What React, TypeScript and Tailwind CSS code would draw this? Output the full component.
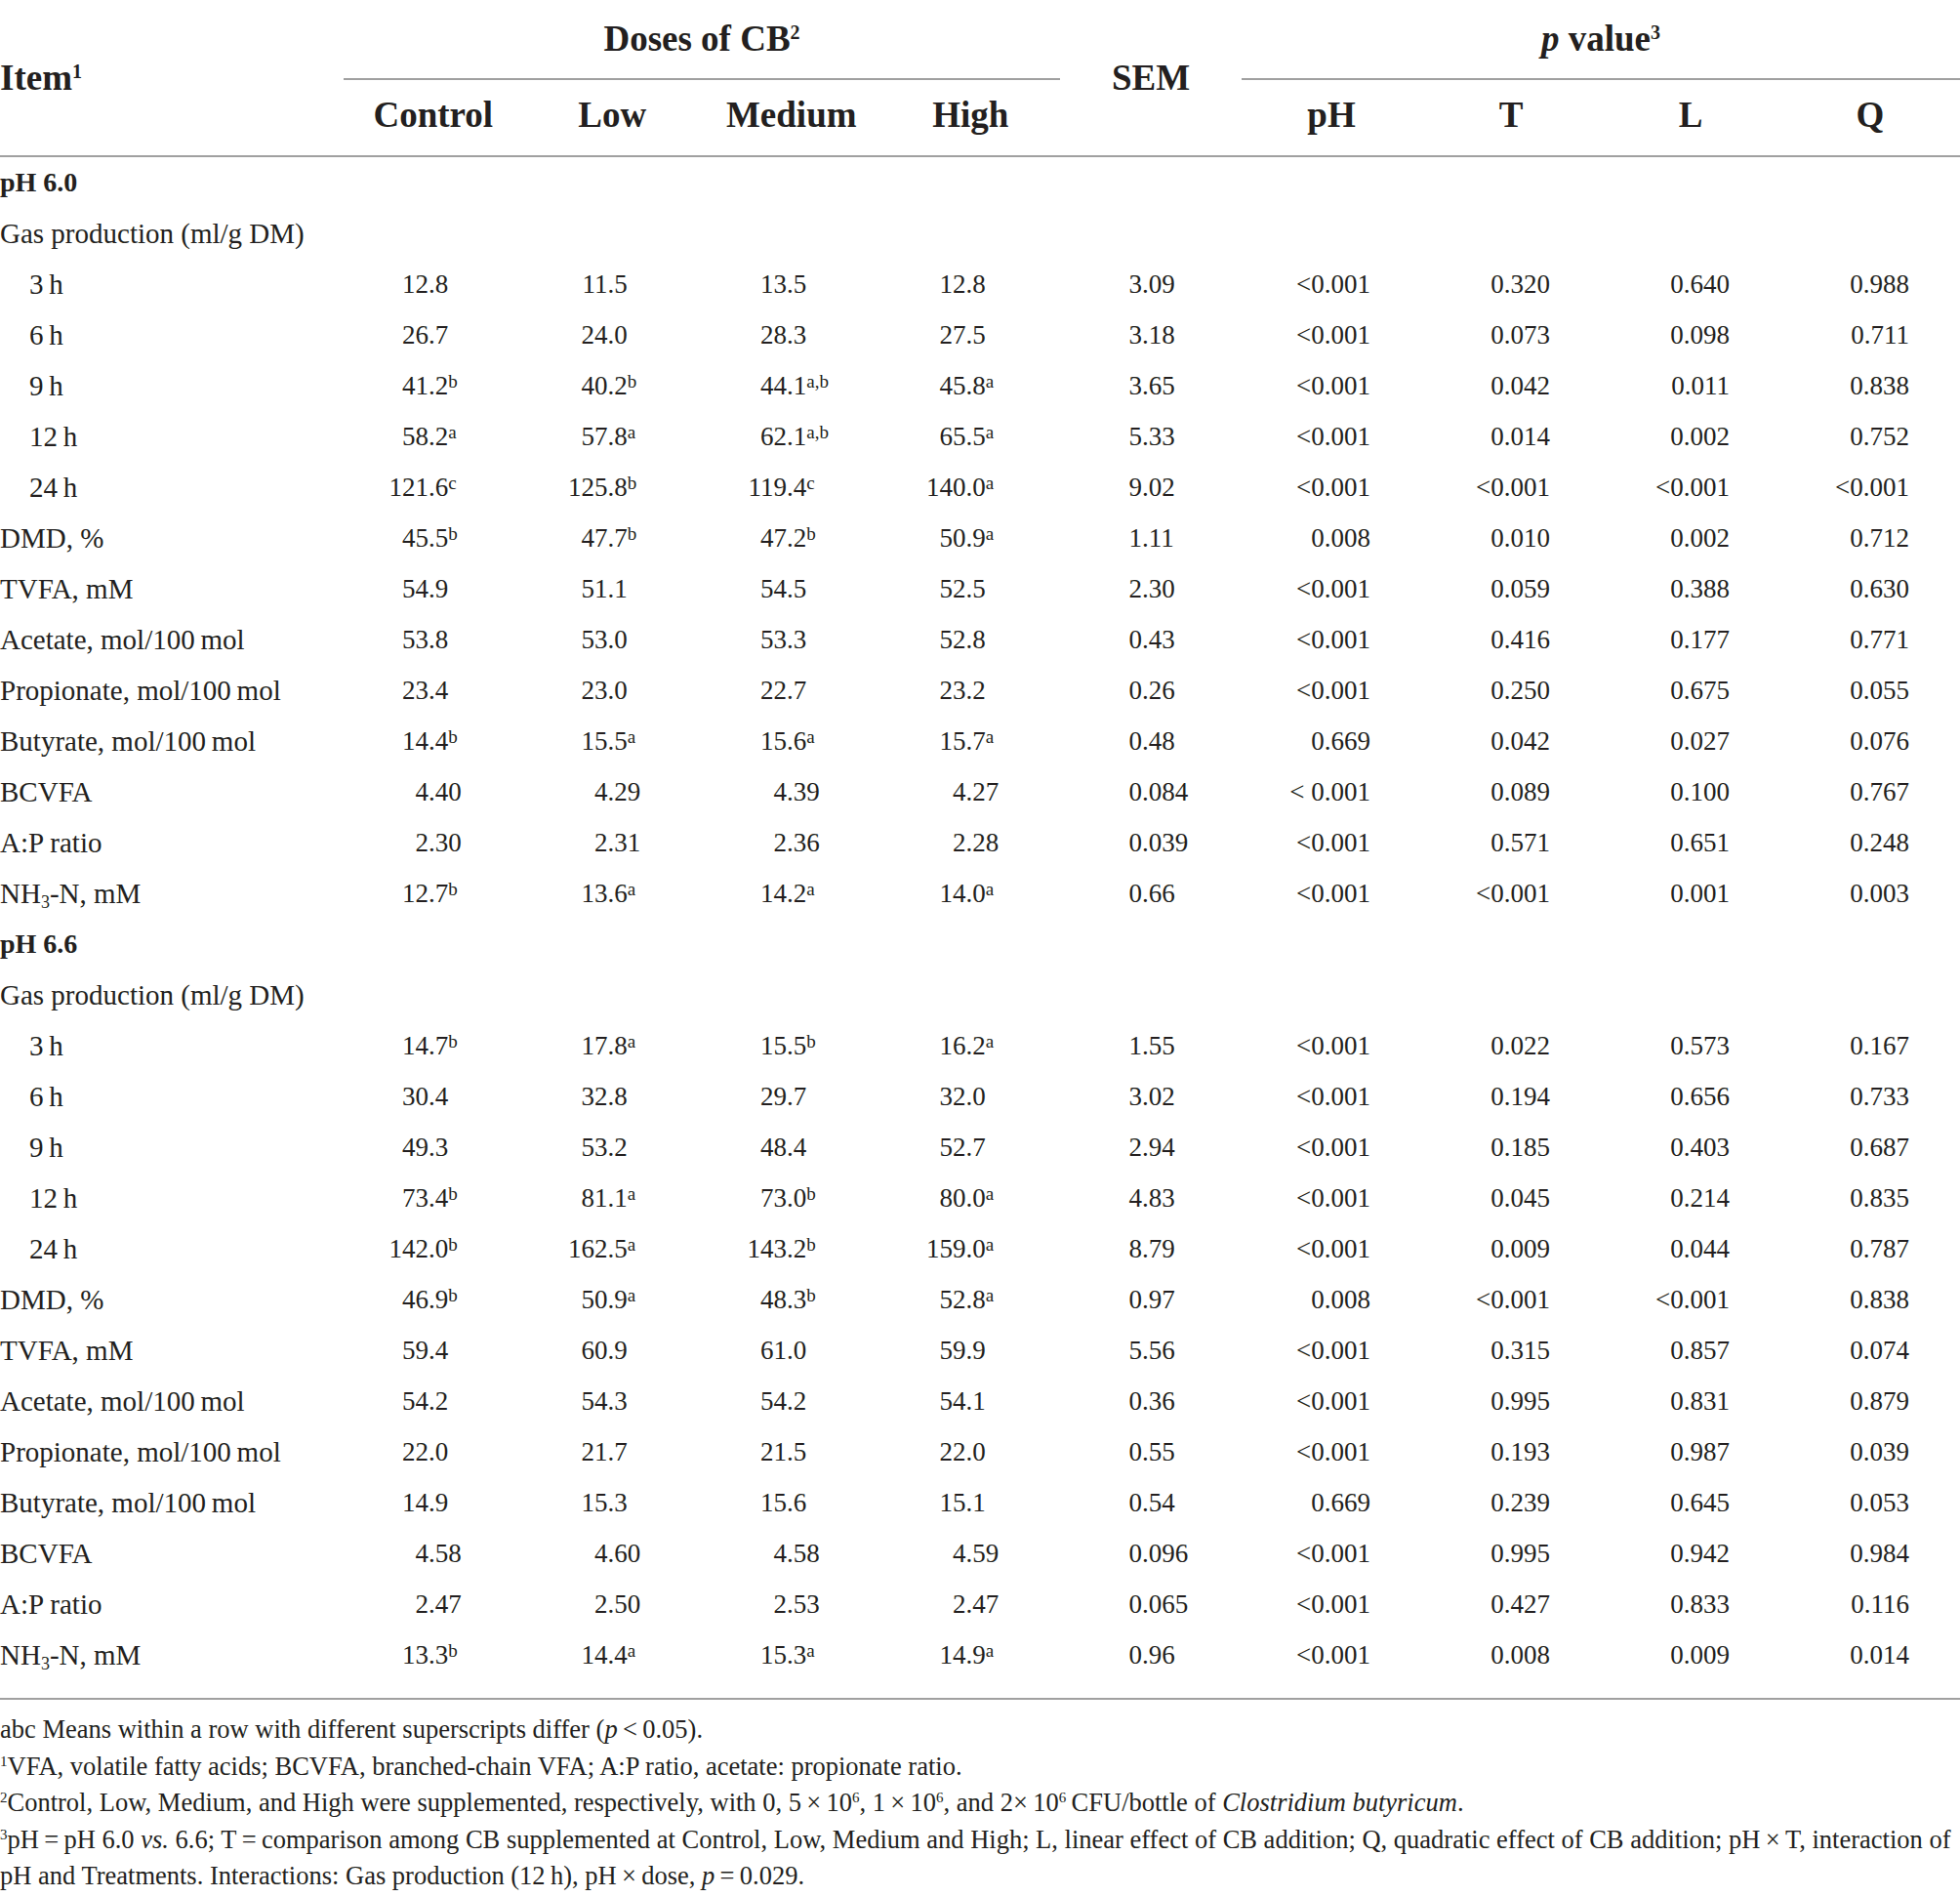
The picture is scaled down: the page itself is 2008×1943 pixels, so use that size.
import React from "react";

const GRID = "grid grid-cols-[352px_repeat(4,183.5px)_186px_repeat(4,184px)]";

type RowData = {
  label: React.ReactNode;
  indent?: boolean;
  d: string[];
  sem: string;
  p: string[];
};

function Dec({ v, sem }: { v: string; sem?: boolean }) {
  const [num, sup] = v.split("|");
  const i = num.indexOf(".");
  const intPart = num.slice(0, i);
  const frac = num.slice(i);
  return (
    <div className="flex text-[27px] leading-[32px]">
      <span className={sem ? "w-[84px] shrink-0 text-right" : "w-[87px] shrink-0 text-right"}>{intPart}</span>
      <span className="whitespace-nowrap">
        {frac}
        {sup && <sup className="text-[19px] top-[-7px]">{sup}</sup>}
      </span>
    </div>
  );
}

function Row({ label, indent, d, sem, p }: RowData) {
  return (
    <div className={`${GRID} h-[52px] items-center`}>
      <div className={indent ? "pl-[30px] text-[29px] leading-[32px] whitespace-nowrap" : "text-[29px] leading-[32px] whitespace-nowrap"}>
        {label}
      </div>
      {d.map((v, k) => (
        <Dec key={k} v={v} />
      ))}
      <Dec v={sem} sem />
      {p.map((v, k) => (
        <div key={k} className="text-right pr-[52px] text-[27px] leading-[32px] whitespace-pre">
          {v}
        </div>
      ))}
    </div>
  );
}

function Section({ title, rows }: { title: string; rows: RowData[] }) {
  return (
    <>
      <div className="h-[52px] flex items-center text-[28px] font-bold leading-[32px]">{title}</div>
      <div className="h-[52px] flex items-center text-[29px] leading-[32px]">Gas production (ml/g DM)</div>
      {rows.map((r, k) => (
        <Row key={k} {...r} />
      ))}
    </>
  );
}

const NH3 = (
  <>
    NH<sub className="text-[18px]">3</sub>-N, mM
  </>
);

const ph60: RowData[] = [
  { label: "3\u2009h", indent: true, d: ["12.8", "11.5", "13.5", "12.8"], sem: "3.09", p: ["<0.001", "0.320", "0.640", "0.988"] },
  { label: "6\u2009h", indent: true, d: ["26.7", "24.0", "28.3", "27.5"], sem: "3.18", p: ["<0.001", "0.073", "0.098", "0.711"] },
  { label: "9\u2009h", indent: true, d: ["41.2|b", "40.2|b", "44.1|a,b", "45.8|a"], sem: "3.65", p: ["<0.001", "0.042", "0.011", "0.838"] },
  { label: "12\u2009h", indent: true, d: ["58.2|a", "57.8|a", "62.1|a,b", "65.5|a"], sem: "5.33", p: ["<0.001", "0.014", "0.002", "0.752"] },
  { label: "24\u2009h", indent: true, d: ["121.6|c", "125.8|b", "119.4|c", "140.0|a"], sem: "9.02", p: ["<0.001", "<0.001", "<0.001", "<0.001"] },
  { label: "DMD, %", d: ["45.5|b", "47.7|b", "47.2|b", "50.9|a"], sem: "1.11", p: ["0.008", "0.010", "0.002", "0.712"] },
  { label: "TVFA, mM", d: ["54.9", "51.1", "54.5", "52.5"], sem: "2.30", p: ["<0.001", "0.059", "0.388", "0.630"] },
  { label: "Acetate, mol/100\u2009mol", d: ["53.8", "53.0", "53.3", "52.8"], sem: "0.43", p: ["<0.001", "0.416", "0.177", "0.771"] },
  { label: "Propionate, mol/100\u2009mol", d: ["23.4", "23.0", "22.7", "23.2"], sem: "0.26", p: ["<0.001", "0.250", "0.675", "0.055"] },
  { label: "Butyrate, mol/100\u2009mol", d: ["14.4|b", "15.5|a", "15.6|a", "15.7|a"], sem: "0.48", p: ["0.669", "0.042", "0.027", "0.076"] },
  { label: "BCVFA", d: ["4.40", "4.29", "4.39", "4.27"], sem: "0.084", p: ["< 0.001", "0.089", "0.100", "0.767"] },
  { label: "A:P ratio", d: ["2.30", "2.31", "2.36", "2.28"], sem: "0.039", p: ["<0.001", "0.571", "0.651", "0.248"] },
  { label: NH3, d: ["12.7|b", "13.6|a", "14.2|a", "14.0|a"], sem: "0.66", p: ["<0.001", "<0.001", "0.001", "0.003"] },
];

const ph66: RowData[] = [
  { label: "3\u2009h", indent: true, d: ["14.7|b", "17.8|a", "15.5|b", "16.2|a"], sem: "1.55", p: ["<0.001", "0.022", "0.573", "0.167"] },
  { label: "6\u2009h", indent: true, d: ["30.4", "32.8", "29.7", "32.0"], sem: "3.02", p: ["<0.001", "0.194", "0.656", "0.733"] },
  { label: "9\u2009h", indent: true, d: ["49.3", "53.2", "48.4", "52.7"], sem: "2.94", p: ["<0.001", "0.185", "0.403", "0.687"] },
  { label: "12\u2009h", indent: true, d: ["73.4|b", "81.1|a", "73.0|b", "80.0|a"], sem: "4.83", p: ["<0.001", "0.045", "0.214", "0.835"] },
  { label: "24\u2009h", indent: true, d: ["142.0|b", "162.5|a", "143.2|b", "159.0|a"], sem: "8.79", p: ["<0.001", "0.009", "0.044", "0.787"] },
  { label: "DMD, %", d: ["46.9|b", "50.9|a", "48.3|b", "52.8|a"], sem: "0.97", p: ["0.008", "<0.001", "<0.001", "0.838"] },
  { label: "TVFA, mM", d: ["59.4", "60.9", "61.0", "59.9"], sem: "5.56", p: ["<0.001", "0.315", "0.857", "0.074"] },
  { label: "Acetate, mol/100\u2009mol", d: ["54.2", "54.3", "54.2", "54.1"], sem: "0.36", p: ["<0.001", "0.995", "0.831", "0.879"] },
  { label: "Propionate, mol/100\u2009mol", d: ["22.0", "21.7", "21.5", "22.0"], sem: "0.55", p: ["<0.001", "0.193", "0.987", "0.039"] },
  { label: "Butyrate, mol/100\u2009mol", d: ["14.9", "15.3", "15.6", "15.1"], sem: "0.54", p: ["0.669", "0.239", "0.645", "0.053"] },
  { label: "BCVFA", d: ["4.58", "4.60", "4.58", "4.59"], sem: "0.096", p: ["<0.001", "0.995", "0.942", "0.984"] },
  { label: "A:P ratio", d: ["2.47", "2.50", "2.53", "2.47"], sem: "0.065", p: ["<0.001", "0.427", "0.833", "0.116"] },
  { label: NH3, d: ["13.3|b", "14.4|a", "15.3|a", "14.9|a"], sem: "0.96", p: ["<0.001", "0.008", "0.009", "0.014"] },
];

export default function App() {
  return (
    <div className="w-[2008px] h-[1943px] bg-white text-[#231f20] font-['Liberation_Serif',serif] overflow-hidden">
      {/* Header */}
      <div className={`${GRID} grid-rows-[82px_77px] border-b-2 border-[#a0a0a0] font-bold text-[37px] leading-[44px]`}>
        <div className="row-span-2 flex items-center">
          <span>
            Item<sup className="text-[20px] top-[-12px]">1</sup>
          </span>
        </div>
        <div className="col-span-4 flex items-center justify-center border-b-2 border-[#a0a0a0]">
          <span>
            Doses of CB<sup className="text-[20px] top-[-12px] font-bold">2</sup>
          </span>
        </div>
        <div className="row-span-2 flex items-center justify-center">SEM</div>
        <div className="col-span-4 flex items-center justify-center border-b-2 border-[#a0a0a0]">
          <span>
            <i>p</i> value<sup className="text-[20px] top-[-12px]">3</sup>
          </span>
        </div>
        {["Control", "Low", "Medium", "High"].map((h) => (
          <div key={h} className="flex items-start justify-center pt-[14px]">
            {h}
          </div>
        ))}
        {["pH", "T", "L", "Q"].map((h) => (
          <div key={h} className="flex items-start justify-center pt-[14px]">
            {h}
          </div>
        ))}
      </div>

      {/* Body */}
      <div className="pb-[18px] border-b-2 border-[#a0a0a0]">
        <Section title="pH 6.0" rows={ph60} />
        <Section title="pH 6.6" rows={ph66} />
      </div>

      {/* Footnotes */}
      <div className="pt-[12px] text-[26.5px] leading-[37.5px]">
        <p>
          abc Means within a row with different superscripts differ (<i>p</i>{"\u2009<\u2009"}0.05).
        </p>
        <p>
          <sup className="text-[15px] top-[-9px]">1</sup>VFA, volatile fatty acids; BCVFA, branched-chain VFA; A:P ratio, acetate: propionate ratio.
        </p>
        <p>
          <sup className="text-[15px] top-[-9px]">2</sup>Control, Low, Medium, and High were supplemented, respectively, with 0, 5{"\u2009×\u2009"}10
          <sup className="text-[15px] top-[-9px]">6</sup>, 1{"\u2009×\u2009"}10<sup className="text-[15px] top-[-9px]">6</sup>, and 2×{"\u2009"}10
          <sup className="text-[15px] top-[-9px]">6</sup>
          {"\u2009"}CFU/bottle of <i>Clostridium butyricum</i>.
        </p>
        <p>
          <span className="whitespace-nowrap">
            <sup className="text-[15px] top-[-9px]">3</sup>pH{"\u2009=\u2009"}pH 6.0 <i>vs.</i> 6.6; T{"\u2009=\u2009"}comparison among CB supplemented at Control, Low, Medium and High; L, linear effect of CB addition; Q, quadratic effect of CB addition; pH{"\u2009×\u2009"}T, interaction of
          </span>
          <br />
          pH and Treatments. Interactions: Gas production (12{"\u2009"}h), pH{"\u2009×\u2009"}dose, <i>p</i>
          {"\u2009=\u2009"}0.029.
        </p>
      </div>
    </div>
  );
}
